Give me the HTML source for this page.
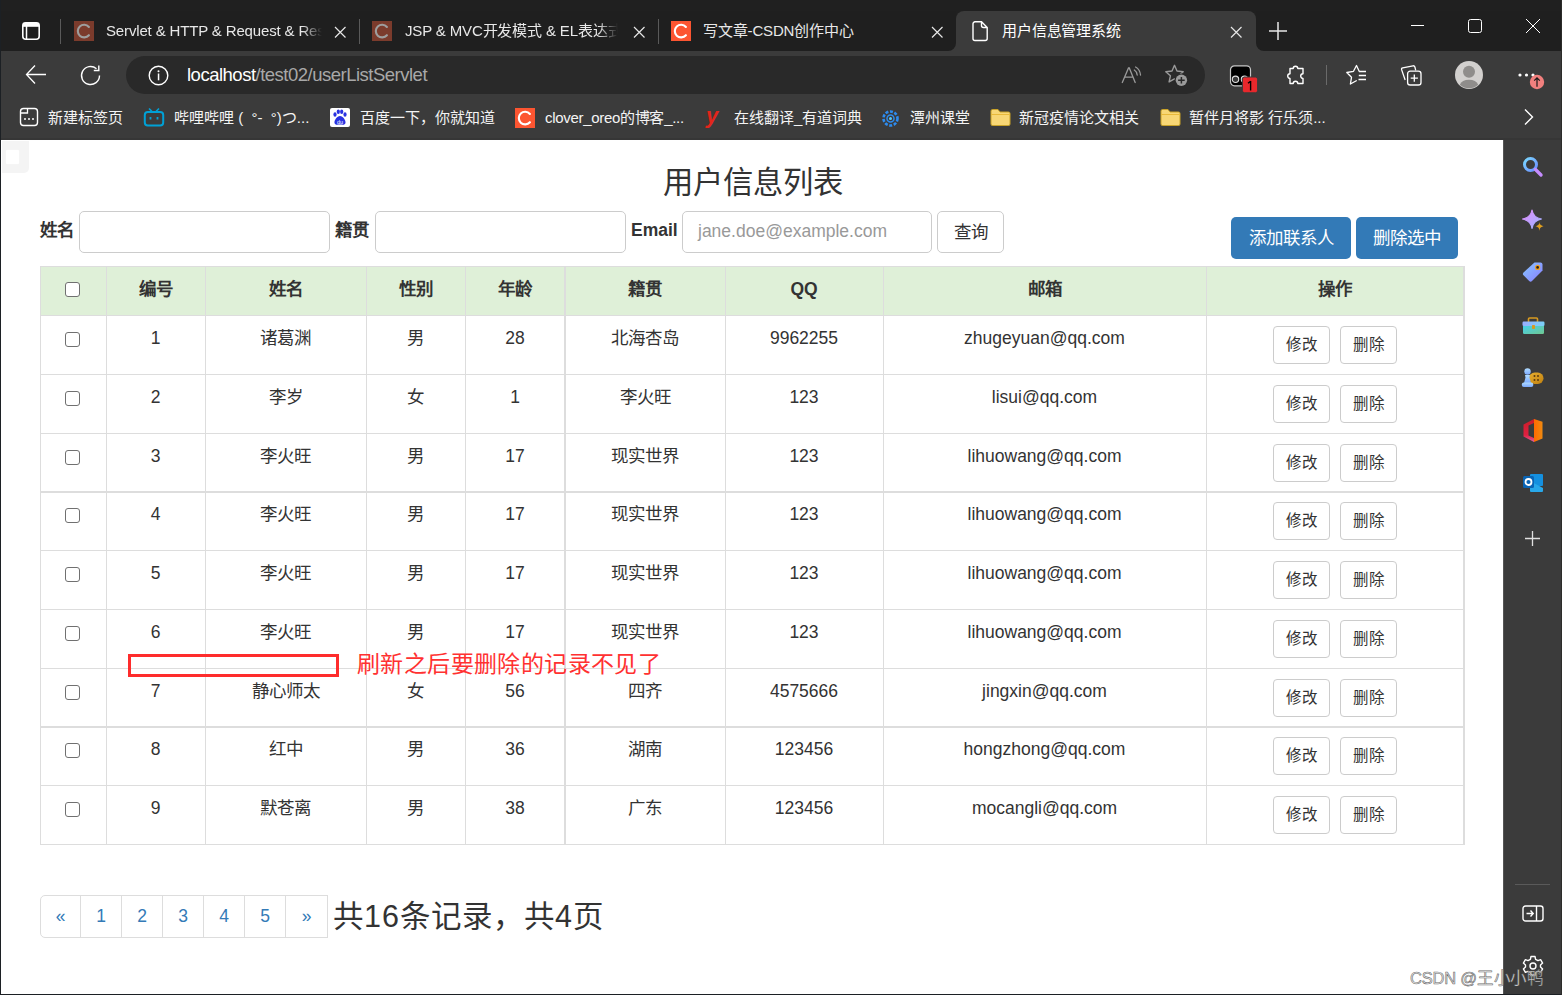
<!DOCTYPE html>
<html lang="zh-CN"><head><meta charset="utf-8">
<style>
*{box-sizing:border-box;margin:0;padding:0}
html,body{width:1562px;height:995px;overflow:hidden;background:#3b3b3b;font-family:"Liberation Sans",sans-serif;text-spacing-trim:space-all}
.abs{position:absolute}
#tabs{position:absolute;left:0;top:0;width:1562px;height:51px;background:#202020}
#edge{position:absolute;left:0;top:0;width:1px;height:995px;background:#1c2024;z-index:5}
#bottom{position:absolute;left:0;top:994px;width:1562px;height:1px;background:#1c2024;z-index:5}
#toolbar{position:absolute;left:0;top:51px;width:1562px;height:89px;background:#3b3b3b}
#content{position:absolute;left:1px;top:140px;width:1502px;height:854px;background:#fff;overflow:hidden}
#side{position:absolute;left:1503px;top:140px;width:59px;height:855px;background:#3b3b3b;border-left:1px solid #555}
.tabt{position:absolute;top:21px;font-size:15px;letter-spacing:-0.15px;color:#e8e8e8;white-space:nowrap;line-height:20px}
.x{position:absolute;top:25px;width:14px;height:14px}
.sep{position:absolute;top:19px;width:1px;height:25px;background:#555}
.bm{position:absolute;top:56.5px;font-size:15px;color:#f4f4f4;white-space:nowrap;line-height:20px}

.hl{left:40px;width:1425px;background:#ddd}
.vl{top:266px;height:579px;background:#ddd}
.th{font-weight:bold;font-size:17.5px;line-height:24px;text-align:center;color:#333}
.td{font-size:17.5px;line-height:24px;text-align:center;color:#333;font-weight:300}
.cb{width:15px;height:15px;border:1.3px solid #707070;border-radius:3px;background:#fff}
.bs{width:57px;height:38px;border:1px solid #ccc;border-radius:4px;font-size:15.5px;line-height:36px;text-align:center;color:#333;background:#fff;font-weight:300}
.inp{height:42px;width:251px;border:1px solid #ccc;border-radius:5px;background:#fff}
.lbl{font-weight:bold;font-size:17.5px;line-height:24px;color:#333}
.bp{height:42px;border-radius:5px;background:#337ab7;color:#fff;font-size:17.5px;line-height:42px;text-align:center}
.pg{top:895px;height:43px;width:42px;border:1px solid #ddd;color:#337ab7;font-size:17.5px;line-height:41px;text-align:center;background:#fff}

.fav{top:21px;width:20px;height:20px;font-size:18px;line-height:20px;text-align:center;font-family:'Liberation Sans',sans-serif}
.x{width:14px;height:14px}
</style></head><body>

<div id="tabs">
 <div class="abs" style="left:930px;top:36px;width:350px;height:15px;background:#3b3b3b"></div>
 <div class="abs" style="left:0;top:11px;width:956px;height:40px;background:#1f1f1f;border-radius:0 0 8px 0"></div>
 <div class="abs" style="left:1256px;top:11px;width:306px;height:40px;background:#1f1f1f;border-radius:0 0 0 8px"></div>
 <div class="abs" style="left:956px;top:11px;width:300px;height:40px;background:#3b3b3b;border-radius:8px 8px 0 0"></div>
 <svg class="abs" style="left:20px;top:20px" width="22" height="22" viewBox="0 0 22 22"><rect x="2.8" y="2.8" width="16.4" height="16.4" rx="3" fill="none" stroke="#fff" stroke-width="1.6"/><rect x="2.8" y="2.8" width="16.4" height="4" fill="#fff"/><line x1="6.5" y1="6" x2="6.5" y2="19" stroke="#fff" stroke-width="1.5"/></svg>
 <div class="sep" style="left:60px;background:#5a5a5a"></div>
 <svg class="abs" style="left:74px;top:21px" width="20" height="20" viewBox="0 0 20 20"><rect width="20" height="20" fill="#7b3b2c"/><path d="M14.9 6A6.3 6.3 0 1 0 14.9 14.2" fill="none" stroke="#9e9e9e" stroke-width="2.1" stroke-linecap="round"/></svg>
 <div class="tabt" style="left:106px;width:216px;overflow:hidden;-webkit-mask-image:linear-gradient(90deg,#000 calc(100% - 20px),transparent)">Servlet &amp; HTTP &amp; Request &amp; Response</div>
 <svg class="abs x" style="left:333px"><path d="M2 2L12.5 12.5M12.5 2L2 12.5" stroke="#e6e6e6" stroke-width="1.2"/></svg>
 <div class="sep" style="left:359px;background:#5a5a5a"></div>
 <svg class="abs" style="left:372px;top:21px" width="20" height="20" viewBox="0 0 20 20"><rect width="20" height="20" fill="#7b3b2c"/><path d="M14.9 6A6.3 6.3 0 1 0 14.9 14.2" fill="none" stroke="#9e9e9e" stroke-width="2.1" stroke-linecap="round"/></svg>
 <div class="tabt" style="left:405px;width:213px;overflow:hidden;-webkit-mask-image:linear-gradient(90deg,#000 calc(100% - 20px),transparent)">JSP &amp; MVC开发模式 &amp; EL表达式</div>
 <svg class="abs x" style="left:632px"><path d="M2 2L12.5 12.5M12.5 2L2 12.5" stroke="#e6e6e6" stroke-width="1.2"/></svg>
 <div class="sep" style="left:658px;background:#5a5a5a"></div>
 <svg class="abs" style="left:671px;top:21px" width="20" height="20" viewBox="0 0 20 20"><rect width="20" height="20" fill="#fc5531"/><path d="M14.9 6A6.3 6.3 0 1 0 14.9 14.2" fill="none" stroke="#fff" stroke-width="2.1" stroke-linecap="round"/></svg>
 <div class="tabt" style="left:703px">写文章-CSDN创作中心</div>
 <svg class="abs x" style="left:930px"><path d="M2 2L12.5 12.5M12.5 2L2 12.5" stroke="#e6e6e6" stroke-width="1.2"/></svg>
 <svg class="abs" style="left:970px;top:20px" width="20" height="22" viewBox="0 0 20 22"><path d="M5 1.8H11.5L17.2 7.5V18.5A2 2 0 0 1 15.2 20.5H5A2 2 0 0 1 3 18.5V3.8A2 2 0 0 1 5 1.8Z M11.5 1.8V5.5A2 2 0 0 0 13.5 7.5H17.2" fill="none" stroke="#fff" stroke-width="1.4"/></svg>
 <div class="tabt" style="left:1002px;color:#fff">用户信息管理系统</div>
 <svg class="abs x" style="left:1229px"><path d="M2 2L12.5 12.5M12.5 2L2 12.5" stroke="#e6e6e6" stroke-width="1.2"/></svg>
 <svg class="abs" style="left:1268px;top:21px" width="20" height="20" viewBox="0 0 20 20"><path d="M10 1V19M1 10H19" stroke="#e8e8e8" stroke-width="1.5"/></svg>
 <svg class="abs" style="left:1410px;top:24px" width="15" height="3"><line x1="1" y1="1.5" x2="14" y2="1.5" stroke="#fff" stroke-width="1"/></svg>
 <svg class="abs" style="left:1467px;top:18px" width="16" height="16"><rect x="1.5" y="1.5" width="13" height="13" rx="2" fill="none" stroke="#fff" stroke-width="1"/></svg>
 <svg class="abs" style="left:1525px;top:18px" width="16" height="16"><path d="M1 1L15 15M15 1L1 15" stroke="#fff" stroke-width="1"/></svg>
</div>

<div id="toolbar">
 <svg class="abs" style="left:24px;top:13px" width="24" height="22" viewBox="0 0 24 22"><path d="M2.5 10.5H22M11 1.5L2.5 10.5L11 19.5" fill="none" stroke="#fff" stroke-width="1.3"/></svg>
 <svg class="abs" style="left:79px;top:13px" width="24" height="24" viewBox="0 0 24 24"><path d="M20.5 11.5A9 9 0 1 1 17.5 4.8" fill="none" stroke="#fff" stroke-width="1.4"/><path d="M19.8 1.5V6.5H14.8" fill="none" stroke="#fff" stroke-width="1.4"/></svg>
 <div class="abs" style="left:126px;top:5px;width:1079px;height:38px;background:#292929;border-radius:19px"></div>
 <svg class="abs" style="left:147px;top:14px" width="23" height="21" viewBox="0 0 23 21"><circle cx="11.5" cy="10.5" r="9.3" fill="none" stroke="#fff" stroke-width="1.4"/><rect x="10.8" y="8.5" width="1.5" height="6.8" fill="#fff"/><circle cx="11.5" cy="6.2" r="1" fill="#fff"/></svg>
 <div class="abs" style="left:187px;top:13px;font-size:18.5px;line-height:22px;letter-spacing:-0.5px;color:#fff;white-space:nowrap">localhost<span style="color:#a8a8a8">/test02/userListServlet</span></div>
 <svg class="abs" style="left:1120px;top:13px" width="24" height="22" viewBox="0 0 24 22"><path d="M2.3 18.5L8.5 4H9.3L15.2 18.5M4.5 13.2H13" fill="none" stroke="#9a9a9a" stroke-width="1.3" stroke-linecap="round"/><path d="M14.3 6Q16.8 7.5 17.2 11M15.6 3Q20 5.5 20.5 11" fill="none" stroke="#9a9a9a" stroke-width="1.3" stroke-linecap="round"/></svg>
 <svg class="abs" style="left:1164px;top:13px" width="26" height="24" viewBox="0 0 26 24"><path d="M10.5 1.3 L13.0 7.0 L19.2 7.7 L14.6 11.8 L15.9 17.9 L10.5 14.8 L5.1 17.9 L6.4 11.8 L1.8 7.7 L8.0 7.0Z" fill="none" stroke="#9a9a9a" stroke-width="1.4" stroke-linejoin="round"/><circle cx="17.4" cy="16.3" r="6.8" fill="#292929"/><circle cx="17.4" cy="16.3" r="5.7" fill="#9a9a9a"/><path d="M17.4 13V19.6M14.1 16.3H20.7" stroke="#292929" stroke-width="1.5"/></svg>
 <svg class="abs" style="left:1229px;top:13px" width="32" height="30" viewBox="0 0 32 30"><rect x="1.5" y="1.8" width="20" height="20" rx="4" fill="#000" stroke="#c8c8c8" stroke-width="1.2"/><circle cx="6.5" cy="15.3" r="3.2" fill="#3b3b3b" stroke="#e0e0e0" stroke-width="1.1"/><circle cx="15.5" cy="15.3" r="3.2" fill="#3b3b3b" stroke="#e0e0e0" stroke-width="1.1"/><rect x="13.4" y="13" width="15.2" height="15.8" rx="2.2" fill="#e8282c" stroke="#3b3b3b" stroke-width="1"/><path d="M21.6 17V26.5M21.6 17.2L19 19.2" fill="none" stroke="#000" stroke-width="1.4"/></svg>
 <svg class="abs" style="left:1284px;top:12px" width="23" height="24" viewBox="0 0 23 24"><path d="M6 5.5H9.2A2.3 2.3 0 1 1 13.8 5.5H19V10.8A2.3 2.3 0 1 0 19 15.4V20.5H13.8A2.3 2.3 0 1 0 9.2 20.5H6V15.4A2.3 2.3 0 1 1 6 10.8Z" fill="none" stroke="#fff" stroke-width="1.4" stroke-linejoin="round"/></svg>
 <div class="abs" style="left:1326px;top:14px;width:1px;height:20px;background:#6a6a6a"></div>
 <svg class="abs" style="left:1344px;top:13px" width="24" height="23" viewBox="0 0 24 23"><path d="M15.3 7.5L12.5 1.5L9.5 7.3L2.8 8.5L7.5 13.3L6.4 20L12.3 16.8" fill="none" stroke="#fff" stroke-width="1.3" stroke-linejoin="round" stroke-linecap="round"/><path d="M15.3 7.5H22M14.8 11.5H22M14.5 15.5H22" stroke="#fff" stroke-width="1.3"/></svg>
 <svg class="abs" style="left:1399px;top:13px" width="24" height="24" viewBox="0 0 24 24"><path d="M6 15.5L2.6 5.6Q2.2 4.1 3.7 3.8L14 1.8Q15.4 1.6 15.9 3L16.6 5.8" fill="none" stroke="#fff" stroke-width="1.3" stroke-linecap="round"/><rect x="8.6" y="7.2" width="13.4" height="13.8" rx="2.6" fill="#3b3b3b" stroke="#fff" stroke-width="1.3"/><path d="M15.3 10.5V17.7M11.7 14.1H18.9" stroke="#fff" stroke-width="1.3"/></svg>
 <svg class="abs" style="left:1455px;top:10px" width="28" height="28" viewBox="0 0 28 28"><circle cx="14" cy="14" r="14" fill="#d2d0ce"/><circle cx="14" cy="10.8" r="6" fill="#8f8d8b"/><path d="M4.8 23.8Q7 18.8 14 18.8Q21 18.8 23.2 23.8A13.8 13.8 0 0 1 4.8 23.8Z" fill="#8f8d8b"/></svg>
 <svg class="abs" style="left:1516.5px;top:19.5px" width="20" height="8"><circle cx="3" cy="4" r="1.6" fill="#fff"/><circle cx="9.5" cy="4" r="1.6" fill="#fff"/><circle cx="16" cy="4" r="1.6" fill="#fff"/></svg>
 <svg class="abs" style="left:1529px;top:23px" width="16" height="16" viewBox="0 0 16 16"><circle cx="8" cy="8" r="7.2" fill="#f1807e"/><path d="M8 12.8V3.8M5.2 6.6L8 3.8L10.8 6.6" fill="none" stroke="#1a1a1a" stroke-width="1.2"/></svg>
 <!-- bookmarks -->
 <svg class="abs" style="left:19px;top:56px" width="20" height="20" viewBox="0 0 20 20"><rect x="1.5" y="1.5" width="17" height="17" rx="3" fill="none" stroke="#fff" stroke-width="1.4"/><path d="M1.5 6H8.5V1.5" fill="none" stroke="#fff" stroke-width="1.3"/><circle cx="6" cy="12" r="1" fill="#fff"/><circle cx="10" cy="12" r="1" fill="#fff"/><circle cx="14" cy="12" r="1" fill="#fff"/></svg>
 <div class="bm" style="left:48px">新建标签页</div>
 <svg class="abs" style="left:143px;top:56px" width="22" height="20" viewBox="0 0 22 20"><path d="M6 1.5L9 4.5M16 1.5L13 4.5" stroke="#00a1d6" stroke-width="1.6"/><rect x="1.8" y="5" width="18.4" height="13.5" rx="3" fill="none" stroke="#00a1d6" stroke-width="2"/><path d="M7.5 10V12.5M14.5 10V12.5" stroke="#00a1d6" stroke-width="1.8"/></svg>
 <div class="bm" style="left:174px">哔哩哔哩 (&nbsp; °-&nbsp; °)つ...</div>
 <div class="abs" style="left:330px;top:57px;width:20px;height:19px;background:#fff;border-radius:2px"></div>
 <svg class="abs" style="left:330px;top:57px" width="20" height="19" viewBox="0 0 20 19"><ellipse cx="5" cy="6.5" rx="1.6" ry="2.2" fill="#2932e1"/><ellipse cx="8.3" cy="3.8" rx="1.6" ry="2.2" fill="#2932e1"/><ellipse cx="11.7" cy="3.8" rx="1.6" ry="2.2" fill="#2932e1"/><ellipse cx="15" cy="6.5" rx="1.6" ry="2.2" fill="#2932e1"/><path d="M10 8C7 8 4 12.5 4.5 15C5 17.5 8 16.5 10 16.5C12 16.5 15 17.5 15.5 15C16 12.5 13 8 10 8Z" fill="#2932e1"/><text x="10" y="15.6" font-size="5.5" fill="#fff" text-anchor="middle" style="font-family:'Liberation Sans',sans-serif">du</text></svg>
 <div class="bm" style="left:360px">百度一下，你就知道</div>
 <svg class="abs" style="left:515px;top:57px" width="20" height="20" viewBox="0 0 20 20"><rect width="20" height="20" fill="#fc5531"/><path d="M14.9 6A6.3 6.3 0 1 0 14.9 14.2" fill="none" stroke="#fff" stroke-width="2.1" stroke-linecap="round"/></svg>
 <div class="bm" style="left:545px;letter-spacing:-0.3px">clover_oreo的博客_...</div>
 <div class="abs" style="left:706px;top:53px;font-size:22px;line-height:24px;font-weight:bold;font-style:italic;color:#e1251b;font-family:'Liberation Sans',sans-serif">y</div>
 <div class="bm" style="left:734px">在线翻译_有道词典</div>
 <svg class="abs" style="left:880px;top:57px" width="21" height="21" viewBox="0 0 21 21"><circle cx="10.5" cy="10.5" r="7" fill="none" stroke="#2d8cf0" stroke-width="2.6" stroke-dasharray="3 1.6"/><circle cx="10.5" cy="10.5" r="3.5" fill="none" stroke="#2d8cf0" stroke-width="1.5"/><circle cx="10.5" cy="10.5" r="1.5" fill="#5ec8f0"/></svg>
 <div class="bm" style="left:910px">潭州课堂</div>
 <svg class="abs" style="left:990px;top:57px" width="21" height="19" viewBox="0 0 21 19"><path d="M1 3A1.5 1.5 0 0 1 2.5 1.5H8L10 4H18.5A1.5 1.5 0 0 1 20 5.5V16A1.5 1.5 0 0 1 18.5 17.5H2.5A1.5 1.5 0 0 1 1 16Z" fill="#f8d775" stroke="#c9a227" stroke-width="1"/><path d="M1 6.5H20" stroke="#e8b93a" stroke-width="1"/></svg>
 <div class="bm" style="left:1019px">新冠疫情论文相关</div>
 <svg class="abs" style="left:1160px;top:57px" width="21" height="19" viewBox="0 0 21 19"><path d="M1 3A1.5 1.5 0 0 1 2.5 1.5H8L10 4H18.5A1.5 1.5 0 0 1 20 5.5V16A1.5 1.5 0 0 1 18.5 17.5H2.5A1.5 1.5 0 0 1 1 16Z" fill="#f8d775" stroke="#c9a227" stroke-width="1"/><path d="M1 6.5H20" stroke="#e8b93a" stroke-width="1"/></svg>
 <div class="bm" style="left:1189px">暂伴月将影 行乐须...</div>
 <svg class="abs" style="left:1522px;top:57px" width="14" height="18" viewBox="0 0 14 18"><path d="M3 1.5L10.5 9L3 16.5" fill="none" stroke="#fff" stroke-width="1.4"/></svg>
 <div class="abs" style="left:0;top:87px;width:1562px;height:2px;background:#363636"></div>
</div>
<div id="content"></div>
<div id="pc" class="abs" style="left:0;top:0;width:1503px;height:994px;overflow:hidden">
<div class="abs" style="left:2px;top:141px;width:27px;height:32px;background:#f4f4f4;border-radius:0 0 5px 0"></div>
<div class="abs" style="left:6px;top:150px;width:13px;height:14px;background:#fff;border-radius:1px;box-shadow:0 0 1px #f8f8f8"></div>
<div class="abs" style="left:1px;top:162px;width:1503px;text-align:center;font-size:30.3px;line-height:42px;color:#333;font-weight:300">用户信息列表</div>
<div class="abs lbl" style="left:40px;top:218px">姓名</div>
<div class="abs inp" style="left:79px;top:211px"></div>
<div class="abs lbl" style="left:335px;top:218px">籍贯</div>
<div class="abs inp" style="left:375px;top:211px"></div>
<div class="abs lbl" style="left:631px;top:218px">Email</div>
<div class="abs inp" style="left:682px;top:211px;width:250px"></div>
<div class="abs" style="left:698px;top:219px;font-size:17.5px;line-height:24px;color:#999">jane.doe@example.com</div>
<div class="abs" style="left:937px;top:211px;width:67px;height:42px;border:1px solid #ccc;border-radius:5px;font-size:17.5px;line-height:40px;text-align:center;color:#333;font-weight:300">查询</div>
<div class="abs bp" style="left:1231px;top:217px;width:120px">添加联系人</div>
<div class="abs bp" style="left:1356px;top:217px;width:102px">删除选中</div>
<div class="abs" style="left:40px;top:266px;width:1425px;height:50px;background:#dff0d8"></div>
<div class="abs hl" style="top:266px;height:1px"></div>
<div class="abs hl" style="top:315px;height:1px"></div>
<div class="abs hl" style="top:374px;height:1px"></div>
<div class="abs hl" style="top:433px;height:1px"></div>
<div class="abs hl" style="top:491px;height:2px"></div>
<div class="abs hl" style="top:550px;height:1px"></div>
<div class="abs hl" style="top:609px;height:1px"></div>
<div class="abs hl" style="top:668px;height:1px"></div>
<div class="abs hl" style="top:726px;height:2px"></div>
<div class="abs hl" style="top:785px;height:1px"></div>
<div class="abs hl" style="top:844px;height:1px"></div>
<div class="abs vl" style="left:40px;width:1px"></div>
<div class="abs vl" style="left:106px;width:1px"></div>
<div class="abs vl" style="left:205px;width:1px"></div>
<div class="abs vl" style="left:366px;width:1px"></div>
<div class="abs vl" style="left:465px;width:1px"></div>
<div class="abs vl" style="left:564px;width:2px"></div>
<div class="abs vl" style="left:725px;width:1px"></div>
<div class="abs vl" style="left:883px;width:1px"></div>
<div class="abs vl" style="left:1206px;width:1px"></div>
<div class="abs vl" style="left:1463px;width:2px"></div>
<div class="abs cb" style="left:65px;top:282px"></div>
<div class="abs th" style="left:106px;width:99px;top:277px">编号</div>
<div class="abs th" style="left:205px;width:161px;top:277px">姓名</div>
<div class="abs th" style="left:366px;width:99px;top:277px">性别</div>
<div class="abs th" style="left:465px;width:100px;top:277px">年龄</div>
<div class="abs th" style="left:565px;width:160px;top:277px">籍贯</div>
<div class="abs th" style="left:725px;width:158px;top:277px">QQ</div>
<div class="abs th" style="left:883px;width:323px;top:277px">邮箱</div>
<div class="abs th" style="left:1206px;width:258px;top:277px">操作</div>
<div class="abs cb" style="left:65px;top:332px"></div>
<div class="abs td" style="left:106px;width:99px;top:326px">1</div>
<div class="abs td" style="left:205px;width:161px;top:326px">诸葛渊</div>
<div class="abs td" style="left:366px;width:99px;top:326px">男</div>
<div class="abs td" style="left:465px;width:100px;top:326px">28</div>
<div class="abs td" style="left:565px;width:160px;top:326px">北海杏岛</div>
<div class="abs td" style="left:725px;width:158px;top:326px">9962255</div>
<div class="abs td" style="left:883px;width:323px;top:326px">zhugeyuan@qq.com</div>
<div class="abs bs" style="left:1273px;top:326px">修改</div>
<div class="abs bs" style="left:1340px;top:326px">删除</div>
<div class="abs cb" style="left:65px;top:391px"></div>
<div class="abs td" style="left:106px;width:99px;top:385px">2</div>
<div class="abs td" style="left:205px;width:161px;top:385px">李岁</div>
<div class="abs td" style="left:366px;width:99px;top:385px">女</div>
<div class="abs td" style="left:465px;width:100px;top:385px">1</div>
<div class="abs td" style="left:565px;width:160px;top:385px">李火旺</div>
<div class="abs td" style="left:725px;width:158px;top:385px">123</div>
<div class="abs td" style="left:883px;width:323px;top:385px">lisui@qq.com</div>
<div class="abs bs" style="left:1273px;top:385px">修改</div>
<div class="abs bs" style="left:1340px;top:385px">删除</div>
<div class="abs cb" style="left:65px;top:450px"></div>
<div class="abs td" style="left:106px;width:99px;top:444px">3</div>
<div class="abs td" style="left:205px;width:161px;top:444px">李火旺</div>
<div class="abs td" style="left:366px;width:99px;top:444px">男</div>
<div class="abs td" style="left:465px;width:100px;top:444px">17</div>
<div class="abs td" style="left:565px;width:160px;top:444px">现实世界</div>
<div class="abs td" style="left:725px;width:158px;top:444px">123</div>
<div class="abs td" style="left:883px;width:323px;top:444px">lihuowang@qq.com</div>
<div class="abs bs" style="left:1273px;top:444px">修改</div>
<div class="abs bs" style="left:1340px;top:444px">删除</div>
<div class="abs cb" style="left:65px;top:508px"></div>
<div class="abs td" style="left:106px;width:99px;top:502px">4</div>
<div class="abs td" style="left:205px;width:161px;top:502px">李火旺</div>
<div class="abs td" style="left:366px;width:99px;top:502px">男</div>
<div class="abs td" style="left:465px;width:100px;top:502px">17</div>
<div class="abs td" style="left:565px;width:160px;top:502px">现实世界</div>
<div class="abs td" style="left:725px;width:158px;top:502px">123</div>
<div class="abs td" style="left:883px;width:323px;top:502px">lihuowang@qq.com</div>
<div class="abs bs" style="left:1273px;top:502px">修改</div>
<div class="abs bs" style="left:1340px;top:502px">删除</div>
<div class="abs cb" style="left:65px;top:567px"></div>
<div class="abs td" style="left:106px;width:99px;top:561px">5</div>
<div class="abs td" style="left:205px;width:161px;top:561px">李火旺</div>
<div class="abs td" style="left:366px;width:99px;top:561px">男</div>
<div class="abs td" style="left:465px;width:100px;top:561px">17</div>
<div class="abs td" style="left:565px;width:160px;top:561px">现实世界</div>
<div class="abs td" style="left:725px;width:158px;top:561px">123</div>
<div class="abs td" style="left:883px;width:323px;top:561px">lihuowang@qq.com</div>
<div class="abs bs" style="left:1273px;top:561px">修改</div>
<div class="abs bs" style="left:1340px;top:561px">删除</div>
<div class="abs cb" style="left:65px;top:626px"></div>
<div class="abs td" style="left:106px;width:99px;top:620px">6</div>
<div class="abs td" style="left:205px;width:161px;top:620px">李火旺</div>
<div class="abs td" style="left:366px;width:99px;top:620px">男</div>
<div class="abs td" style="left:465px;width:100px;top:620px">17</div>
<div class="abs td" style="left:565px;width:160px;top:620px">现实世界</div>
<div class="abs td" style="left:725px;width:158px;top:620px">123</div>
<div class="abs td" style="left:883px;width:323px;top:620px">lihuowang@qq.com</div>
<div class="abs bs" style="left:1273px;top:620px">修改</div>
<div class="abs bs" style="left:1340px;top:620px">删除</div>
<div class="abs cb" style="left:65px;top:685px"></div>
<div class="abs td" style="left:106px;width:99px;top:679px">7</div>
<div class="abs td" style="left:205px;width:161px;top:679px">静心师太</div>
<div class="abs td" style="left:366px;width:99px;top:679px">女</div>
<div class="abs td" style="left:465px;width:100px;top:679px">56</div>
<div class="abs td" style="left:565px;width:160px;top:679px">四齐</div>
<div class="abs td" style="left:725px;width:158px;top:679px">4575666</div>
<div class="abs td" style="left:883px;width:323px;top:679px">jingxin@qq.com</div>
<div class="abs bs" style="left:1273px;top:679px">修改</div>
<div class="abs bs" style="left:1340px;top:679px">删除</div>
<div class="abs cb" style="left:65px;top:743px"></div>
<div class="abs td" style="left:106px;width:99px;top:737px">8</div>
<div class="abs td" style="left:205px;width:161px;top:737px">红中</div>
<div class="abs td" style="left:366px;width:99px;top:737px">男</div>
<div class="abs td" style="left:465px;width:100px;top:737px">36</div>
<div class="abs td" style="left:565px;width:160px;top:737px">湖南</div>
<div class="abs td" style="left:725px;width:158px;top:737px">123456</div>
<div class="abs td" style="left:883px;width:323px;top:737px">hongzhong@qq.com</div>
<div class="abs bs" style="left:1273px;top:737px">修改</div>
<div class="abs bs" style="left:1340px;top:737px">删除</div>
<div class="abs cb" style="left:65px;top:802px"></div>
<div class="abs td" style="left:106px;width:99px;top:796px">9</div>
<div class="abs td" style="left:205px;width:161px;top:796px">默苍离</div>
<div class="abs td" style="left:366px;width:99px;top:796px">男</div>
<div class="abs td" style="left:465px;width:100px;top:796px">38</div>
<div class="abs td" style="left:565px;width:160px;top:796px">广东</div>
<div class="abs td" style="left:725px;width:158px;top:796px">123456</div>
<div class="abs td" style="left:883px;width:323px;top:796px">mocangli@qq.com</div>
<div class="abs bs" style="left:1273px;top:796px">修改</div>
<div class="abs bs" style="left:1340px;top:796px">删除</div>
<div class="abs" style="left:128px;top:654px;width:211px;height:23px;border:3px solid #fe2c2c"></div>
<div class="abs" style="left:357px;top:648px;font-size:23px;line-height:32px;letter-spacing:0.4px;color:#ff3131;font-weight:350">刷新之后要删除的记录不见了</div>
<div class="abs pg" style="left:40px;width:41px;border-radius:5px 0 0 5px">«</div>
<div class="abs pg" style="left:80px">1</div>
<div class="abs pg" style="left:121px">2</div>
<div class="abs pg" style="left:162px">3</div>
<div class="abs pg" style="left:203px">4</div>
<div class="abs pg" style="left:244px">5</div>
<div class="abs pg" style="left:285px;width:43px">»</div>
<div class="abs" style="left:333px;top:895px;font-size:30.5px;line-height:42px;letter-spacing:1px;color:#333;font-weight:300">共16条记录，共4页</div>
</div>

<div id="side">
 <svg class="abs" style="left:18px;top:16px" width="22" height="22" viewBox="0 0 22 22"><defs><linearGradient id="g1" x1="0" y1="0" x2="1" y2="1"><stop offset="0" stop-color="#7ad8ff"/><stop offset="1" stop-color="#6b8cff"/></linearGradient></defs><circle cx="8.5" cy="8.5" r="6" fill="none" stroke="url(#g1)" stroke-width="3"/><path d="M13.5 13.5L19 19" stroke="#c58cff" stroke-width="3.4" stroke-linecap="round"/></svg>
 <svg class="abs" style="left:18px;top:69px" width="24" height="24" viewBox="0 0 24 24"><defs><linearGradient id="g2" x1="0" y1="0" x2="1" y2="1"><stop offset="0" stop-color="#e58aff"/><stop offset="1" stop-color="#9ab8ff"/></linearGradient></defs><path d="M10 1Q11.2 8.6 19.5 10Q11.2 11.6 10 19.5Q8.8 11.6 0.5 10Q8.8 8.6 10 1Z" fill="url(#g2)" stroke="url(#g2)" stroke-width="1.2" stroke-linejoin="round"/><path d="M17.5 13C17.8 15.6 18.6 16.4 21.6 17.2C18.6 18 17.8 18.8 17.5 22C17.2 18.8 16.4 18 13.4 17.2C16.4 16.4 17.2 15.6 17.5 13Z" fill="#e0a020"/></svg>
 <svg class="abs" style="left:17px;top:121px" width="23" height="23" viewBox="0 0 23 23"><defs><linearGradient id="g3" x1="0" y1="0" x2="1" y2="1"><stop offset="0" stop-color="#86c8ff"/><stop offset="1" stop-color="#8a7cff"/></linearGradient></defs><path d="M13.5 1.5H19.5A2 2 0 0 1 21.5 3.5V9.5L11 20A2 2 0 0 1 8.2 20L2.5 14.3A2 2 0 0 1 2.5 11.5Z" fill="url(#g3)"/><circle cx="16.6" cy="6.4" r="2" fill="#222" stroke="#f0a020" stroke-width="1.2"/></svg>
 <svg class="abs" style="left:18px;top:177px" width="23" height="18" viewBox="0 0 23 18"><defs><linearGradient id="g4" x1="0" y1="0" x2="1" y2="1"><stop offset="0" stop-color="#44d0f0"/><stop offset="1" stop-color="#70c890"/></linearGradient><linearGradient id="g5" x1="0" y1="0" x2="1" y2="0"><stop offset="0" stop-color="#9aaeff"/><stop offset="1" stop-color="#7ad0f8"/></linearGradient></defs><path d="M6.5 5V2A1 1 0 0 1 7.5 1H14.5A1 1 0 0 1 15.5 2V5" fill="none" stroke="#d89a20" stroke-width="1.6"/><rect x="1" y="8" width="21" height="9" rx="1.2" fill="url(#g4)"/><rect x="0.5" y="4.5" width="22" height="4.5" rx="1.2" fill="url(#g5)"/><rect x="10" y="8" width="3" height="4" rx="0.8" fill="#d89a20"/></svg>
 <svg class="abs" style="left:17px;top:227px" width="24" height="22" viewBox="0 0 24 22"><defs><linearGradient id="g6" x1="0" y1="0" x2="0" y2="1"><stop offset="0" stop-color="#b0dcff"/><stop offset="1" stop-color="#7aa8ff"/></linearGradient><linearGradient id="g7" x1="0" y1="0" x2="1" y2="1"><stop offset="0" stop-color="#e8b030"/><stop offset="1" stop-color="#c08010"/></linearGradient></defs><rect x="8" y="5.5" width="14.5" height="11.5" rx="5.7" fill="url(#g7)"/><circle cx="13.5" cy="9" r="1" fill="#5a3a10"/><circle cx="17" cy="9" r="1" fill="#5a3a10"/><circle cx="13.5" cy="13" r="1" fill="#5a3a10"/><circle cx="17" cy="13" r="1" fill="#5a3a10"/><circle cx="6.5" cy="4.5" r="3.2" fill="url(#g6)"/><path d="M4 8H9L8.5 10.5L10 16H3L4.5 10.5Z" fill="url(#g6)"/><rect x="0.8" y="15.5" width="11.5" height="4.5" rx="2" fill="url(#g6)"/></svg>
 <svg class="abs" style="left:18px;top:278px" width="22" height="25" viewBox="0 0 22 25"><defs><linearGradient id="g8" x1="0" y1="0" x2="1" y2="0"><stop offset="0" stop-color="#ff6a00"/><stop offset="1" stop-color="#f08a10"/></linearGradient><linearGradient id="g9" x1="0" y1="0" x2="0" y2="1"><stop offset="0" stop-color="#c81e28"/><stop offset="0.7" stop-color="#e02040"/><stop offset="1" stop-color="#e060a0"/></linearGradient></defs><path d="M12 1L20.5 3.8V20.5L12 24Z" fill="url(#g8)"/><path d="M1.5 6.5L12 1V5L6.5 7.5V17.5L12 20V24L1.5 18.5Z" fill="url(#g9)"/></svg>
 <svg class="abs" style="left:18px;top:330px" width="22" height="23" viewBox="0 0 22 23"><rect x="8" y="4" width="13" height="12" rx="1" fill="#1490df"/><path d="M8 11L21 18V21A1 1 0 0 1 20 22H9A1 1 0 0 1 8 21Z" fill="#28a8ea"/><rect x="1" y="6" width="11" height="12" rx="1.5" fill="#0a64b4"/><circle cx="6.5" cy="12" r="3" fill="none" stroke="#fff" stroke-width="1.8"/></svg>
 <svg class="abs" style="left:20px;top:390px" width="17" height="17" viewBox="0 0 17 17"><path d="M8.5 1V16M1 8.5H16" stroke="#e0e0e0" stroke-width="1.3"/></svg>
 <div class="abs" style="left:11px;top:744px;width:35px;height:1px;background:#5a5a5a"></div>
 <svg class="abs" style="left:18px;top:765px" width="22" height="17" viewBox="0 0 22 17"><rect x="1" y="1" width="20" height="15" rx="2.5" fill="none" stroke="#fff" stroke-width="1.4"/><path d="M14.5 1V16" stroke="#fff" stroke-width="1.4"/><path d="M4.5 8.5H11M8.5 5.5L11.2 8.5L8.5 11.5" fill="none" stroke="#fff" stroke-width="1.4"/></svg>
 <svg class="abs" style="left:18px;top:815px" width="22" height="22" viewBox="0 0 22 22"><path d="M9 1.5H13L13.6 4.3L16 5.6L18.6 4.6L20.6 8.1L18.5 10V12L20.6 13.9L18.6 17.4L16 16.4L13.6 17.7L13 20.5H9L8.4 17.7L6 16.4L3.4 17.4L1.4 13.9L3.5 12V10L1.4 8.1L3.4 4.6L6 5.6L8.4 4.3Z" fill="none" stroke="#fff" stroke-width="1.4" stroke-linejoin="round"/><circle cx="11" cy="11" r="3" fill="none" stroke="#fff" stroke-width="1.4"/></svg>
</div>
<div id="edge"></div>
<div id="bottom"></div>
<div class="abs" style="left:1561px;top:0;width:1px;height:995px;background:#2c2c2a;z-index:5"></div>
<div class="abs" style="left:1410px;top:965.5px;font-size:16.5px;line-height:24px;letter-spacing:-0.2px;color:#e6e6e6;-webkit-text-stroke:0.6px rgba(60,60,60,0.75);white-space:nowrap;z-index:6">CSDN @王小小鸭</div>
</body></html>
